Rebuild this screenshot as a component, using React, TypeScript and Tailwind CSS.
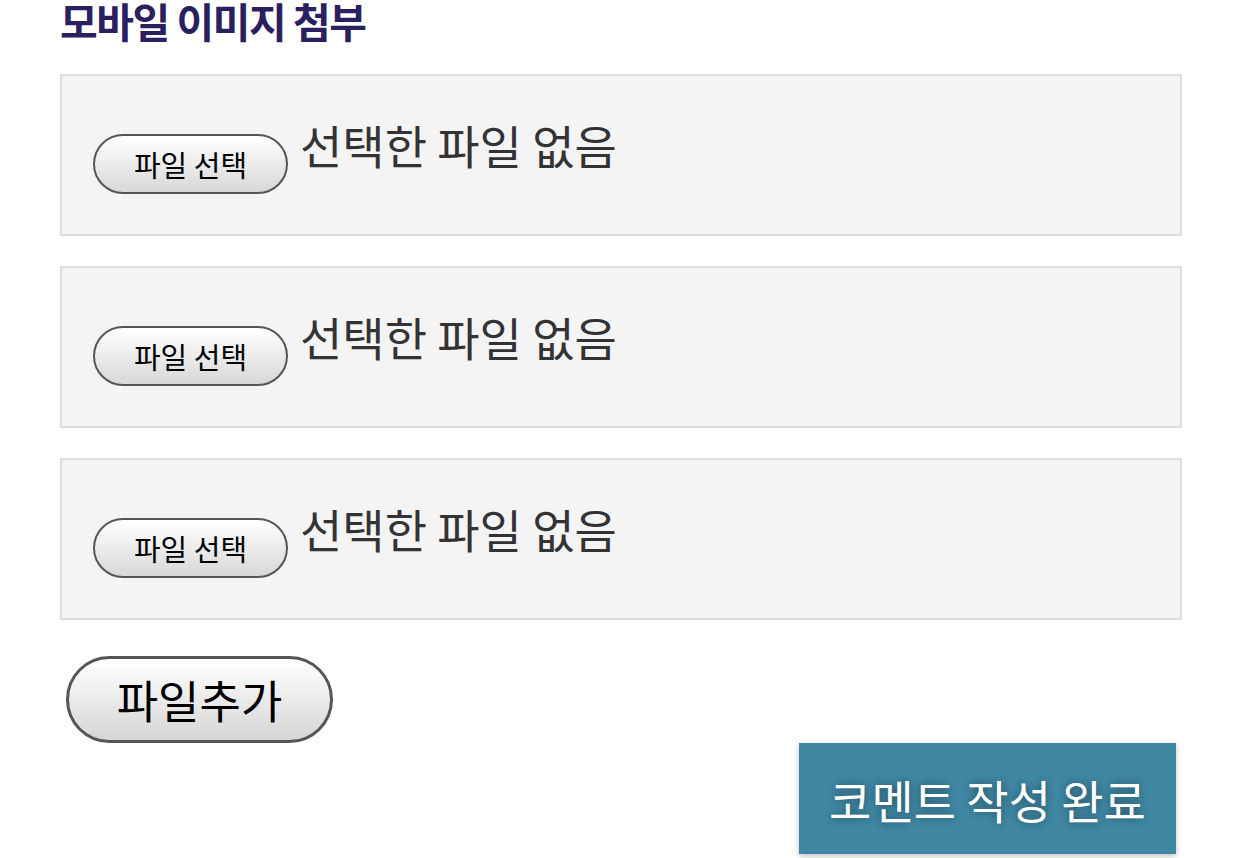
import React from "react";

const font = { fontFamily: '"Noto Sans CJK KR", "Noto Sans", sans-serif' };

function FileRow() {
  return (
    <div className="h-[162px] border-2 border-[#dddddd] bg-[#f4f4f4] pl-[31px] pt-[36px]">
      <div className="flex items-start">
        <span className="mt-[22px] flex h-[60px] w-[195px] items-center justify-center rounded-full border-2 border-[#555555] bg-gradient-to-b from-white to-[#d8d8d8] text-[29px] leading-none text-black">
          파일 선택
        </span>
        <span className="ml-[12px] text-[46px] leading-[1.4] text-[#333333]">선택한 파일 없음</span>
      </div>
    </div>
  );
}

export default function App() {
  return (
    <div className="w-[1242px] h-[858px] overflow-hidden bg-white px-[60px]" style={font}>
      <h2 className="text-[41px] font-bold leading-none tracking-[-1.5px] text-[#2a2060]">
        모바일 이미지 첨부
      </h2>
      <div className="mt-[33px] flex flex-col gap-[30px]">
        <FileRow />
        <FileRow />
        <FileRow />
      </div>
      <div className="mt-[36px] pl-[6px]">
        <button className="flex h-[87px] w-[267px] items-center justify-center rounded-full border-[3px] border-[#555555] bg-gradient-to-b from-white to-[#d6d6d6] text-[45px] leading-none text-black">
          파일추가
        </button>
      </div>
      <div className="flex justify-end pr-[6px]">
        <button className="flex h-[111px] w-[377px] items-center justify-center bg-[#3f87a3] text-[46px] leading-none text-white shadow-[0_2px_6px_rgba(0,0,0,0.25)] [text-shadow:0_0_8px_rgba(0,0,0,0.45)]">
          코멘트 작성 완료
        </button>
      </div>
    </div>
  );
}
